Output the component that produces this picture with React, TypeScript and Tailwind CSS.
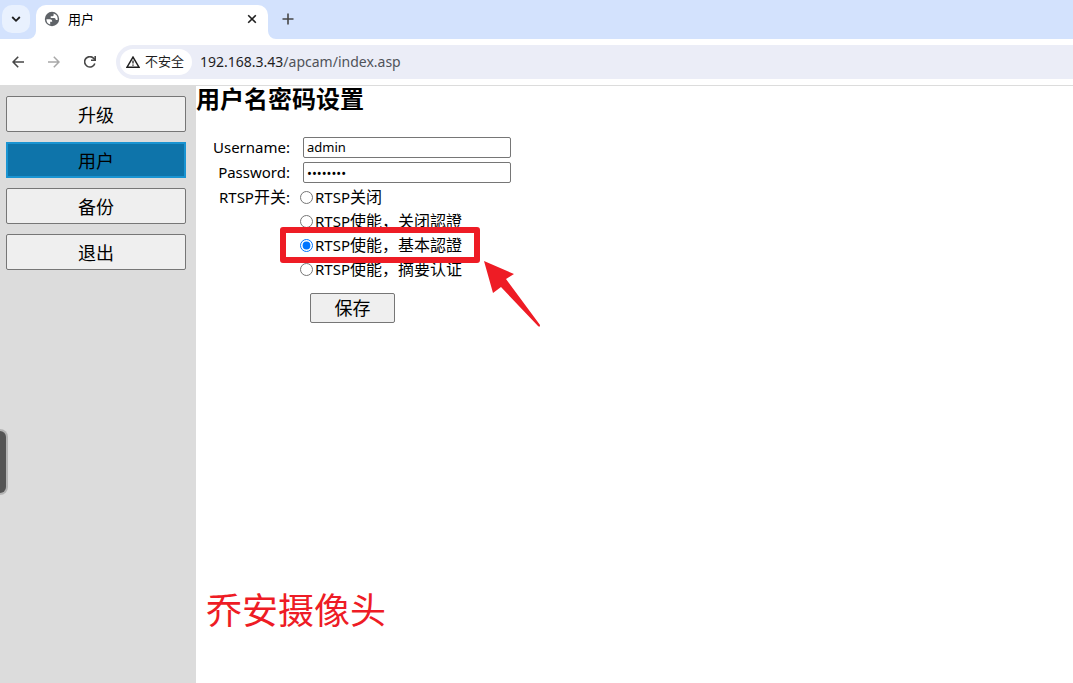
import React, { useState } from 'react'

const MENU = ['升级', '用户', '备份', '退出']

const RTSP_MODES = [
  { value: 'off', label: '关闭' },
  { value: 'noauth', label: '使能，关闭認證' },
  { value: 'basic', label: '使能，基本認證' },
  { value: 'digest', label: '使能，摘要认证' },
]

function TabStrip() {
  return (
    <div className="flex h-[39px] items-end bg-[#d3e2fd]">
      <button aria-label="搜索标签页" className="mb-[6px] ml-[2px] flex size-7 items-center justify-center rounded-[10px] bg-[#e9f1fe]">
        <svg viewBox="0 0 10 10" className="size-[10px]" fill="none" stroke="#1f1f1f" strokeWidth="1.8">
          <path d="M1.2 3L5 6.8 8.8 3" />
        </svg>
      </button>
      <svg viewBox="0 0 8 8" className="ml-[-2px] size-2" fill="#fff">
        <path d="M8 0v8H0a8 8 0 0 0 8-8z" />
      </svg>
      <div className="flex h-[34px] w-[232px] items-center rounded-t-[10px] bg-white pr-[10px] pb-[6px] pl-2">
        <svg viewBox="0 0 16 16" className="size-4">
          <circle cx="8" cy="8" r="7.2" fill="#5f6368" />
          <path d="M2.4 8.2h3.4c2 0 2.4 1 2.4 2.6h-2v2.8A5.7 5.7 0 0 1 2.4 8.2z" fill="#fff" />
          <path d="M9.6 2.6A5.7 5.7 0 0 1 13.6 7v1.9h-1.8c0-1.5-.8-2-2.4-2H6.7V5.3h1.6c.9 0 1.3-.6 1.3-1.3z" fill="#fff" />
        </svg>
        <span className="ml-2 flex-1 text-[13px] leading-4">用户</span>
        <button aria-label="关闭" className="flex size-3 items-center justify-center">
          <svg viewBox="0 0 10 10" className="size-[10px]" fill="none" stroke="#1f1f1f" strokeWidth="1.6">
            <path d="M1.2 1.2l7.6 7.6M8.8 1.2L1.2 8.8" />
          </svg>
        </button>
      </div>
      <svg viewBox="0 0 8 8" className="size-2" fill="#fff">
        <path d="M0 0v8h8a8 8 0 0 1-8-8z" />
      </svg>
      <button aria-label="新标签页" className="mb-[14px] ml-[6px] flex size-3 items-center justify-center">
        <svg viewBox="0 0 12 12" className="size-3" fill="none" stroke="#474747" strokeWidth="1.6">
          <path d="M6 .5v11M.5 6h11" />
        </svg>
      </button>
    </div>
  )
}

function Toolbar() {
  return (
    <div className="flex h-[47px] items-center border-b border-[#dcdcdc] bg-white pl-3">
      <button aria-label="后退" className="size-3">
        <svg viewBox="0 0 12 12" className="size-3" fill="none" stroke="#474747" strokeWidth="1.6">
          <path d="M12 6H1M6.2.7L1 6l5.2 5.3" />
        </svg>
      </button>
      <button aria-label="前进" className="ml-6 size-3" disabled>
        <svg viewBox="0 0 12 12" className="size-3" fill="none" stroke="#a8a8a8" strokeWidth="1.5">
          <path d="M0 6h11M5.8.7L11 6l-5.2 5.3" />
        </svg>
      </button>
      <button aria-label="重新加载" className="ml-6 size-3">
        <svg viewBox="0 0 12 12" className="size-3" fill="none" stroke="#474747" strokeWidth="1.6">
          <path d="M10.8 7.4A5.2 5.2 0 1 1 10 2.7L11 4" />
          <path d="M11.2 0v4.3H7" />
        </svg>
      </button>
      <div className="ml-5 flex h-[34px] flex-1 items-center rounded-l-full bg-[#ebedf7] pl-1">
        <button className="flex h-[26px] items-center rounded-full bg-white pr-2 pl-[6px] text-[13px] text-[#1f1f1f]">
          <svg viewBox="0 0 14 12" className="mr-[5px] h-3 w-[14px]" fill="none" stroke="#1f1f1f" strokeWidth="1.5">
            <path d="M7 1.1L1 11.2h12z" />
            <path d="M7 4.6v3M7 8.5v1.3" strokeWidth="1.3" />
          </svg>
          不安全
        </button>
        <a href="#" className="ml-2 text-[14px] leading-5 text-[#50535a]">
          <span className="text-[#1f1f1f]">192.168.3.43</span>/apcam/index.asp
        </a>
      </div>
    </div>
  )
}

function Sidebar() {
  return (
    <nav className="relative flex w-[196px] shrink-0 flex-col gap-[10px] bg-[#dcdcdc] pt-[10px] pr-[10px] pl-[6px]">
      {MENU.map((item) => (
        <button
          key={item}
          className={
            item === '用户'
              ? 'h-9 border-2 border-[#1a94d2] bg-[#0e74aa] text-[18px] leading-6'
              : 'h-9 rounded-[2px] border border-[#767676] bg-[#efefef] text-[18px] leading-6'
          }
        >
          {item}
        </button>
      ))}
      {/* pull-out handle on the window edge */}
      <div className="absolute top-[343px] left-0 h-[66px] w-2 rounded-r-lg border-2 border-l-0 border-[#b4b4b4] bg-[#555]" />
    </nav>
  )
}

function UserForm() {
  const [mode, setMode] = useState('basic')

  return (
    <form onSubmit={(e) => e.preventDefault()} className="font-['Noto_Sans','Noto_Sans_CJK_SC',sans-serif] text-[15px]">
      <div className="mt-[27px] grid grid-cols-[94px_1fr] gap-y-1">
        <label htmlFor="username" className="text-right leading-5">Username:</label>
        <input
          id="username"
          type="text"
          defaultValue="admin"
          className="ml-[13px] h-[21px] w-[208px] rounded-[2px] border border-[#767676] bg-white px-[3px] pb-px text-[13px]"
        />
        <label htmlFor="password" className="text-right leading-5">Password:</label>
        <input
          id="password"
          type="password"
          defaultValue="12345678"
          className="ml-[13px] h-[21px] w-[208px] rounded-[2px] border border-[#767676] bg-white px-[3px] text-[13px]"
        />
      </div>
      <fieldset className="mt-[2px] grid grid-cols-[94px_1fr]">
        <span className="text-right leading-6">
          RTSP<span className="text-[16px]">开关</span>:
        </span>
        <div className="ml-[10px]">
          {RTSP_MODES.map((m) => (
            <div key={m.value} className="relative flex h-6 items-center">
              <input
                type="radio"
                id={m.value}
                name="rtsp"
                checked={mode === m.value}
                onChange={() => setMode(m.value)}
                className="mr-[2px] size-[13px]"
              />
              <label htmlFor={m.value} className="leading-6">
                RTSP<span className="text-[16px]">{m.label}</span>
              </label>
              {m.value === 'basic' && (
                <>
                  <div className="pointer-events-none absolute top-[-6px] left-[-20px] z-10 h-[36px] w-[200px] rounded-[3px] border-[6px] border-[#ee1c25]" />
                  <svg viewBox="0 0 58 68" className="pointer-events-none absolute top-[27px] left-[183px] z-10 h-[68px] w-[58px]" fill="#ee1c25">
                    <path d="M1 1L31 14L23 19L57 65Q57 68 55 66L18 27L10 33z" />
                  </svg>
                </>
              )}
            </div>
          ))}
        </div>
      </fieldset>
      <button className="mt-3 ml-[114px] h-[30px] w-[85px] rounded-[2px] border border-[#767676] bg-[#efefef] text-[18px] leading-6">
        保存
      </button>
    </form>
  )
}

export default function App() {
  return (
    <div className="flex min-h-screen flex-col bg-white font-['Noto_Sans_CJK_SC',sans-serif] text-black">
      <header className="font-['Noto_Sans','Noto_Sans_CJK_SC',sans-serif]">
        <TabStrip />
        <Toolbar />
      </header>
      <div className="flex flex-1">
        <Sidebar />
        <main className="flex flex-1 flex-col">
          <h1 className="text-[24px] leading-6 font-bold">用户名密码设置</h1>
          <UserForm />
          <p className="mt-auto mb-[51px] ml-[10px] text-[36px] leading-[48px] text-[#ee1c25]">乔安摄像头</p>
        </main>
      </div>
    </div>
  )
}
